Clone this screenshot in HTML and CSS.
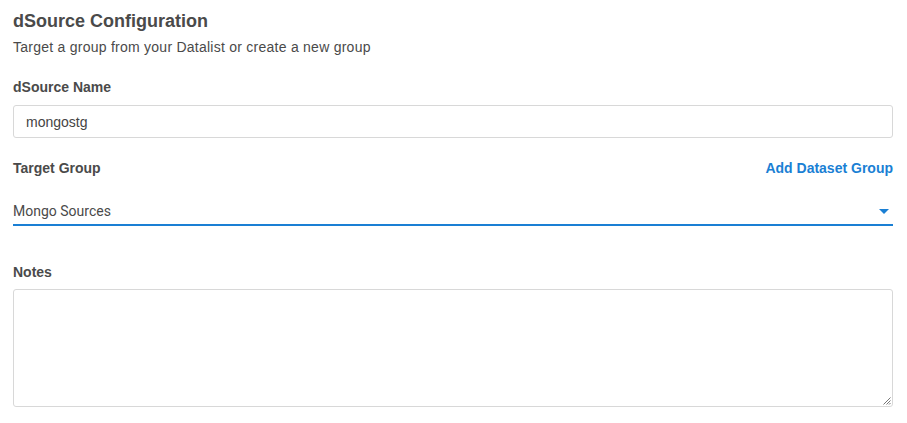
FILE: index.html
```html
<!DOCTYPE html>
<html>
<head>
<meta charset="utf-8">
<link rel="stylesheet" href="styles.css">
</head>
<body>
<div class="page">
  <h1 class="title">dSource Configuration</h1>
  <p class="subtitle">Target a group from your Datalist or create a new group</p>

  <div class="field field-name">
    <label class="label">dSource Name</label>
    <div class="input">mongostg</div>
  </div>

  <div class="field field-group">
    <div class="label-row">
      <label class="label">Target Group</label>
      <a class="link">Add Dataset Group</a>
    </div>
    <div class="select">
      <span class="select-value">Mongo Sources</span>
      <svg class="caret" width="10" height="5" viewBox="0 0 10 5"><path d="M0 0H10L5 5Z" fill="#1a7fd4"/></svg>
    </div>
  </div>

  <div class="field field-notes">
    <label class="label">Notes</label>
    <div class="textarea">
      <svg class="grip" width="9" height="9" viewBox="0 0 9 9"><path d="M8.5 1.5L1.5 8.5M8.5 4.5L4.5 8.5M8.5 7L7 8.5" stroke="#777" stroke-width="1"/></svg>
    </div>
  </div>
</div>
</body>
</html>
```
FILE: styles.css
```css
* { box-sizing: border-box; }
html, body { margin: 0; padding: 0; background: #fff; }
body { font-family: "Liberation Sans", Arial, sans-serif; color: #4a4a4a; }
.page { padding: 9px 14px 0 13px; width: 907px; }
.title { margin: 0; font-size: 18px; font-weight: bold; line-height: 24px; color: #4a4a4a; }
.subtitle { margin: 5px 0 0; font-size: 14px; letter-spacing: 0.25px; line-height: 18px; color: #4a4a4a; }
.field { display: flex; flex-direction: column; }
.field-name { margin-top: 23px; }
.label { font-size: 14px; font-weight: bold; line-height: 16px; color: #4a4a4a; }
.input { margin-top: 10px; height: 33px; border: 1px solid #d8d8d8; border-radius: 3px; padding: 0 12px; display: flex; align-items: center; font-size: 14px; color: #444; }
.field-group { margin-top: 22px; }
.label-row { display: flex; justify-content: space-between; align-items: center; }
.link { font-size: 14px; font-weight: bold; color: #1a7fd4; line-height: 16px; }
.select { margin-top: 26px; height: 24px; border-bottom: 2px solid #1a7fd4; display: flex; justify-content: space-between; align-items: flex-start; padding-right: 4px; }
.select-value { font-family: Roboto, "Liberation Sans", sans-serif; font-size: 14px; line-height: 18px; color: #4a4a4a; }
.caret { margin-top: 7px; }
.field-notes { margin-top: 38px; }
.textarea { margin-top: 9px; height: 118px; border: 1px solid #d8d8d8; border-radius: 3px; position: relative; }
.grip { position: absolute; right: 1px; bottom: 1px; }
```
